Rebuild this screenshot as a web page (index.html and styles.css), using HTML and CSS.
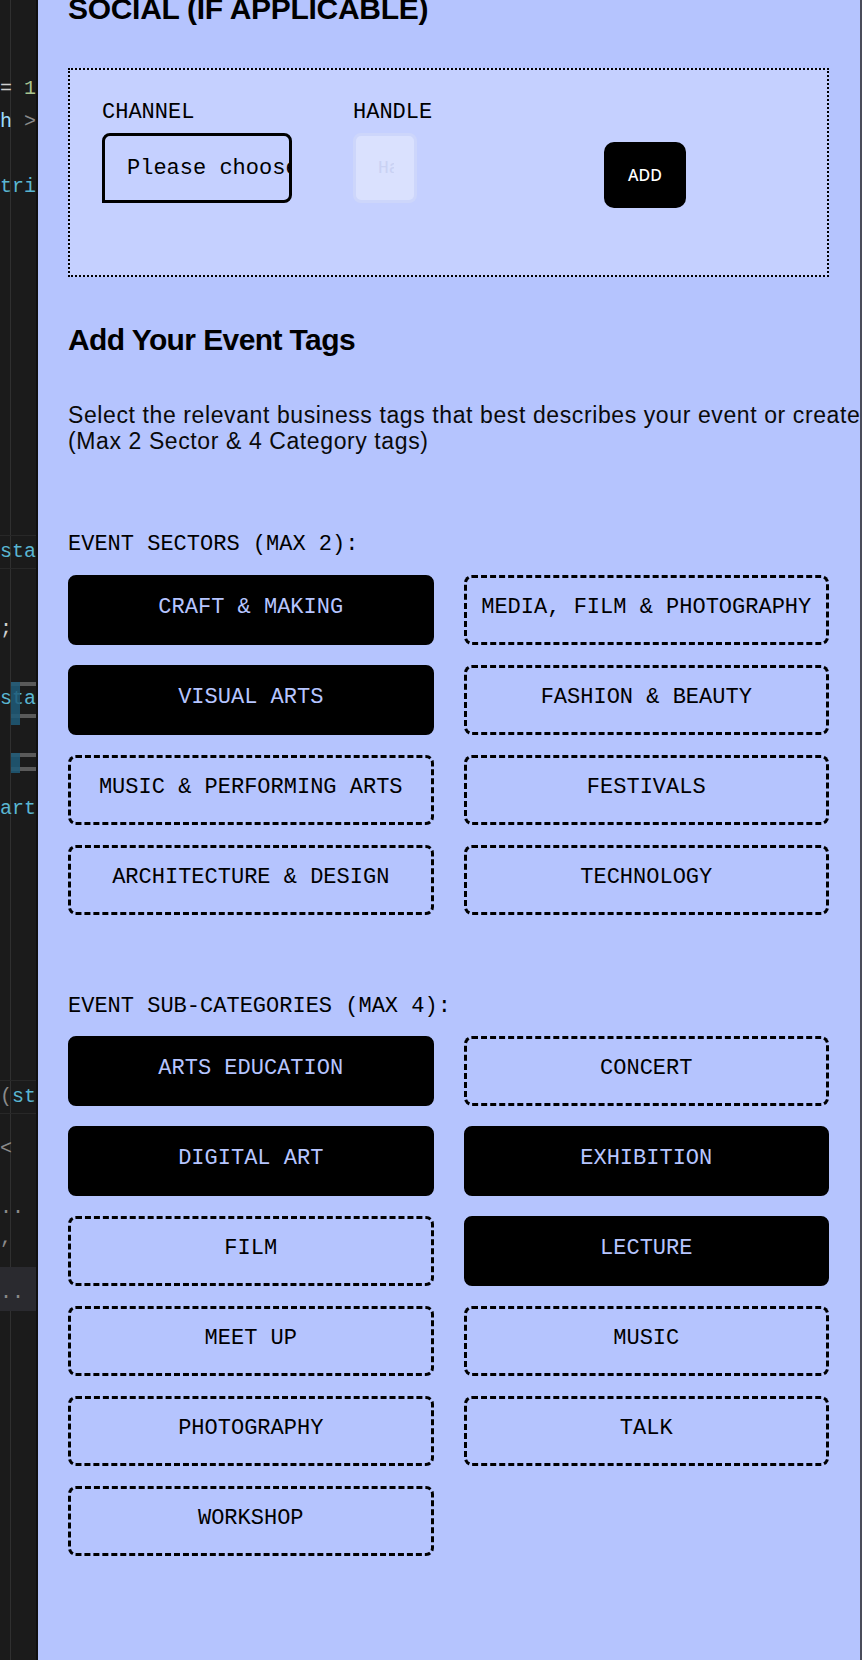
FILE: index.html
```html
<!DOCTYPE html>
<html lang="en">
<head>
    <meta charset="UTF-8">
    <meta name="viewport" content="width=device-width, initial-scale=1.0">
    <title>Event Tags</title>
    <link rel="stylesheet" href="styles.css">
</head>
<body>
    <div class="workspace">
        <div class="editor">
            <div class="code-line l1"><span class="op">=</span> <span class="num">1</span></div>
            <div class="code-line l2"><span class="var">h</span> <span class="op dim">&gt;</span></div>
            <div class="code-line l3"><span class="kw">tri</span></div>
            <div class="code-line l4 current"><span class="kw">sta</span></div>
            <div class="code-line l5"><span class="op">;</span></div>
            <div class="code-line l6"><span class="kw">sta</span></div>
            <div class="code-line l7"><span class="kw">art</span></div>
            <div class="code-line l8 current"><span class="op dim">(</span><span class="kw">st</span></div>
            <div class="code-line l9"><span class="op dim">&lt;</span></div>
            <div class="code-line l10"><span class="op dim">..</span></div>
            <div class="code-line l11"><span class="op dim">,</span></div>
            <div class="code-block"><span class="op dim">..</span></div>

            <span class="mark bar m1"></span>
            <span class="mark bar m2"></span>
            <span class="mark hit m3"></span>
            <span class="mark bar m4"></span>
            <span class="mark bar m5"></span>
            <span class="mark hit m6"></span>
        </div>

        <main class="panel">
            <h2 class="section-title">SOCIAL (IF APPLICABLE)</h2>
            <div class="social-box">
                <div class="social-field">
                    <label class="field-label">CHANNEL</label>
                    <select class="channel-select">
                        <option>Please choose</option>
                    </select>
                </div>
                <div class="social-field">
                    <label class="field-label">HANDLE</label>
                    <input class="handle-input" type="text" placeholder="Handle" disabled>
                </div>
                <div class="social-field">
                    <button class="add-button">ADD</button>
                </div>
            </div>

            <h2 class="tags-title">Add Your Event Tags</h2>
            <p class="tags-intro">
                <span>Select the relevant business tags that best describes your event or create your own.</span>
                <span>(Max 2 Sector &amp; 4 Category tags)</span>
            </p>

            <h3 class="group-label">EVENT SECTORS (MAX 2):</h3>
            <div class="tag-grid">
                <button class="tag selected">CRAFT &amp; MAKING</button>
                <button class="tag">MEDIA, FILM &amp; PHOTOGRAPHY</button>
                <button class="tag selected">VISUAL ARTS</button>
                <button class="tag">FASHION &amp; BEAUTY</button>
                <button class="tag">MUSIC &amp; PERFORMING ARTS</button>
                <button class="tag">FESTIVALS</button>
                <button class="tag">ARCHITECTURE &amp; DESIGN</button>
                <button class="tag">TECHNOLOGY</button>
            </div>

            <h3 class="group-label sub">EVENT SUB-CATEGORIES (MAX 4):</h3>
            <div class="tag-grid">
                <button class="tag selected">ARTS EDUCATION</button>
                <button class="tag">CONCERT</button>
                <button class="tag selected">DIGITAL ART</button>
                <button class="tag selected">EXHIBITION</button>
                <button class="tag">FILM</button>
                <button class="tag selected">LECTURE</button>
                <button class="tag">MEET UP</button>
                <button class="tag">MUSIC</button>
                <button class="tag">PHOTOGRAPHY</button>
                <button class="tag">TALK</button>
                <button class="tag">WORKSHOP</button>
            </div>
        </main>

        <div class="scroll-edge"></div>
    </div>
</body>
</html>
```

FILE: styles.css
```css
body {
    margin: 0;
    background-color: #1b1b1b;
    font-family: "Liberation Sans", Arial, sans-serif;
}

.workspace {
    display: flex;
    height: 1660px;
    overflow: hidden;
}

/* code editor peeking out on the left */
.editor {
    position: relative;
    width: 36px;
    flex-shrink: 0;
    border-right: 2px solid #101010;
    background: linear-gradient(to right, transparent 10px, #303030 10px, #303030 11px, transparent 11px), #1b1b1b;
    font-family: "Liberation Mono", monospace;
    font-size: 20px;
    overflow: hidden;
    white-space: nowrap;
}

.code-line {
    height: 22px;
    line-height: 22px;
}

.code-line.current {
    border-top: 1px solid #282828;
    border-bottom: 1px solid #282828;
    padding: 5px 0;
}

.l1 { margin-top: 78px; }
.l2 { margin-top: 11px; }
.l3 { margin-top: 43px; }
.l4 { margin-top: 337px; }
.l5 { margin-top: 49px; }
.l6 { margin-top: 48px; }
.l7 { margin-top: 88px; }
.l8 { margin-top: 260px; }
.l9 { margin-top: 24px; }
.l10 { margin-top: 37px; }
.l11 { margin-top: 8px; }

.code-block {
    margin-top: 18px;
    height: 44px;
    line-height: 52px;
    background-color: #2a2a2f;
}

.op { color: #d0d0d0; }
.op.dim { color: #8a8a8a; }
.num { color: #a9c48f; }
.var { color: #9cdcfe; }
.kw { color: #5ab6d2; }

.mark {
    position: absolute;
    left: 11px;
}

.mark.bar {
    width: 25px;
    height: 4px;
    background-color: #5a5a5a;
}

.mark.hit {
    width: 9px;
    background-color: #1f5a78;
    opacity: 0.85;
}

.m1 { top: 682px; height: 6px; }
.m2 { top: 714px; }
.m3 { top: 682px; height: 43px; }
.m4 { top: 753px; }
.m5 { top: 767px; }
.m6 { top: 753px; height: 20px; }

/* form panel */
.panel {
    flex: 1;
    background-color: #b5c4fe;
    padding: 0 31px 0 30px;
    overflow: hidden;
    color: #000;
}

.scroll-edge {
    width: 2px;
    flex-shrink: 0;
    background-color: #4a4c5a;
}

.section-title {
    margin: -9px 0 41px 0;
    font-size: 30px;
    line-height: 36px;
    font-weight: bold;
    letter-spacing: -0.3px;
}

.social-box {
    display: grid;
    grid-template-columns: 251px 251px auto;
    height: 103px;
    padding: 30px 32px 72px 32px;
    border: 2px dotted #000;
    background-color: #c5d0ff;
}

.field-label {
    display: block;
    margin-bottom: 7px;
    font-family: "Liberation Mono", monospace;
    font-size: 22px;
    line-height: 26px;
}

.channel-select {
    appearance: none;
    -webkit-appearance: none;
    display: block;
    box-sizing: border-box;
    width: 190px;
    height: 70px;
    padding: 0 0 0 22px;
    border: 3.5px solid #000;
    border-radius: 8px;
    border-bottom-left-radius: 0;
    background-color: transparent;
    font-family: "Liberation Mono", monospace;
    font-size: 22px;
    color: #000;
}

.handle-input {
    display: block;
    box-sizing: border-box;
    width: 64px;
    height: 70px;
    padding: 0 20px 0 22px;
    border: 3px solid #cdd6fb;
    border-radius: 8px;
    background-color: #dae1fe;
    font-family: "Liberation Mono", monospace;
    font-size: 18px;
}

.handle-input::placeholder {
    color: #c9d1f3;
}

.add-button {
    margin-top: 42px;
    width: 82px;
    height: 66px;
    border: none;
    border-radius: 10px;
    background-color: #000;
    color: #fff;
    font-family: "Noto Sans", sans-serif;
    font-size: 16px;
    font-weight: 500;
    cursor: pointer;
}

.tags-title {
    margin: 45px 0 0 0;
    font-size: 30px;
    line-height: 36px;
    font-weight: bold;
    letter-spacing: -0.6px;
}

.tags-intro {
    margin: 44px 0 0 0;
    font-size: 23px;
    line-height: 26px;
    letter-spacing: 0.6px;
    color: #0a0a0a;
}

.tags-intro span {
    display: block;
    white-space: nowrap;
}

.group-label {
    margin: 78px 0 17px 0;
    font-family: "Liberation Mono", monospace;
    font-size: 22px;
    line-height: 26px;
    font-weight: normal;
}

.group-label.sub {
    margin-top: 79px;
    margin-bottom: 16px;
}

.tag-grid {
    display: grid;
    grid-template-columns: 1fr 1fr;
    column-gap: 30px;
    row-gap: 20px;
}

.tag {
    height: 70px;
    padding: 0 0 6px 0;
    border: 3px dashed #000;
    border-radius: 8px;
    background-color: transparent;
    color: #000;
    font-family: "Liberation Mono", monospace;
    font-size: 22px;
    cursor: pointer;
}

.tag.selected {
    border-style: solid;
    background-color: #000;
    color: #b6c5ff;
}
```
